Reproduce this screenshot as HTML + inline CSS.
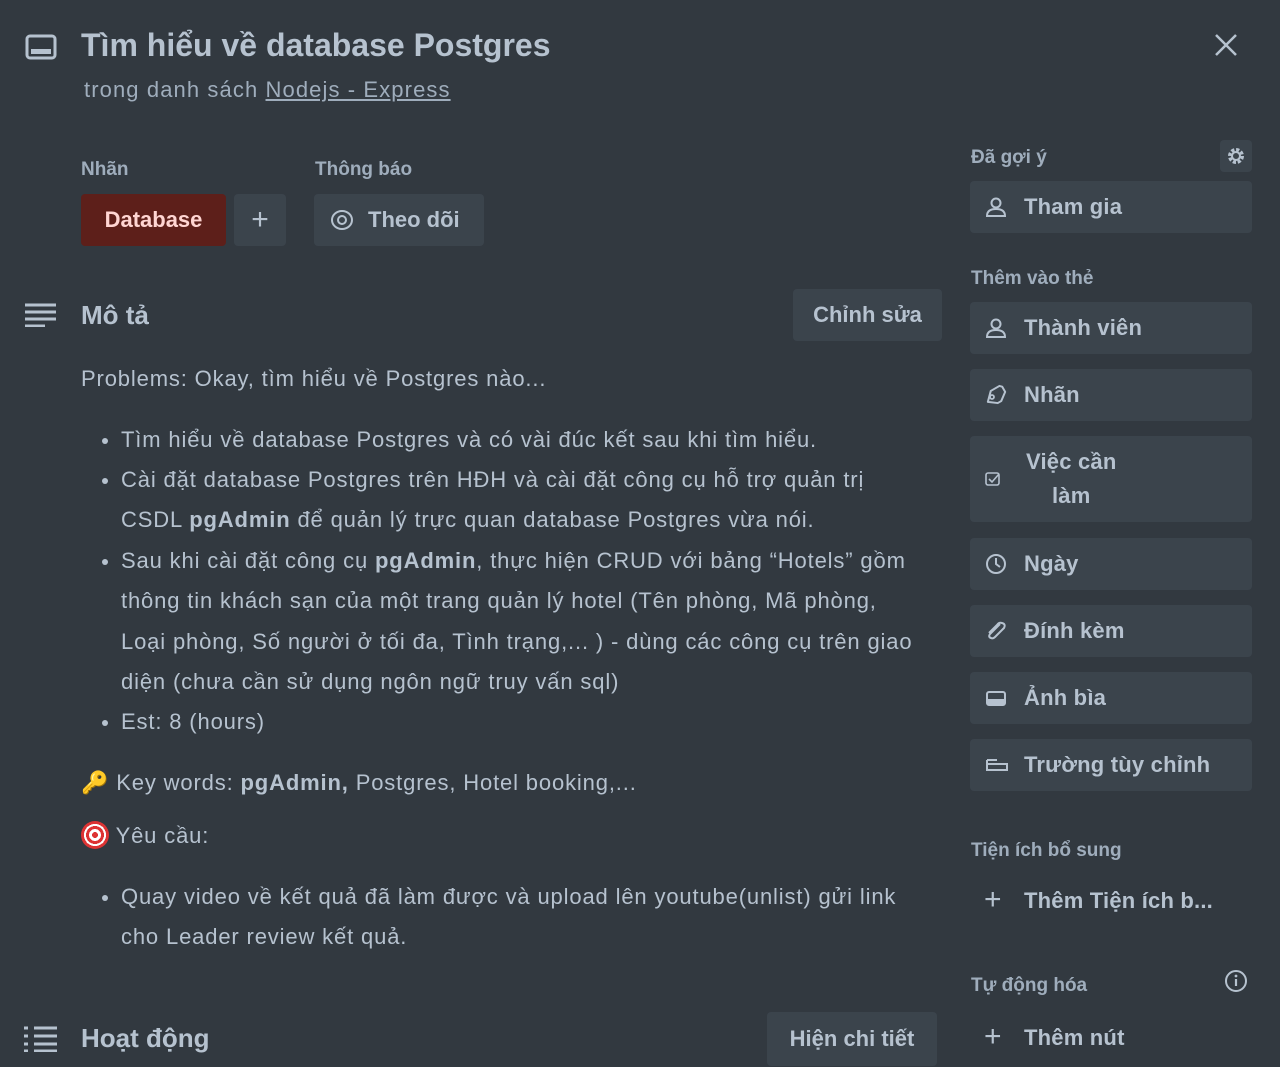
<!DOCTYPE html>
<html><head><meta charset="utf-8"><style>
*{margin:0;padding:0;box-sizing:border-box}
body{width:1280px;height:1067px;background:#323940;color:#b6c2cf;font-family:"Liberation Sans","Noto Sans CJK JP",sans-serif;position:relative;overflow:hidden}
.a{position:absolute;white-space:nowrap}
.btn{position:absolute;background:#3b444c;border-radius:4px;color:#b6c2cf;font-size:22px;display:flex;align-items:center}
.sb{left:970px;width:282px;height:52px;padding-left:54px;font-weight:bold;letter-spacing:0.2px}
.sb svg{position:absolute;left:15px;top:50%;transform:translateY(-50%)}
.h{font-size:19px;font-weight:bold;color:#9fadbc}
.t{font-size:22px;line-height:40.4px;letter-spacing:0.85px}
.li{position:absolute;left:121px;font-size:22px;line-height:40.4px;width:840px;letter-spacing:0.85px;white-space:nowrap}
.li::before{content:"";position:absolute;left:-19px;top:18px;width:6px;height:6px;border-radius:50%;background:#b6c2cf}
b{font-weight:bold}
</style></head><body>
<svg class="a" style="left:25px;top:34px" width="32" height="26" viewBox="0 0 32 26"><rect x="2" y="2" width="28" height="22" rx="3" fill="none" stroke="#b6c2cf" stroke-width="3"/><rect x="6" y="15" width="20" height="5" fill="#b6c2cf"/></svg>
<div class="a" style="left:81px;top:27px;font-size:32px;font-weight:bold;color:#b6c2cf">Tìm hiểu về database Postgres</div>
<div class="a" style="left:84px;top:77px;font-size:22px;color:#9fadbc;letter-spacing:1.1px">trong danh sách <span style="text-decoration:underline">Nodejs - Express</span></div>
<svg class="a" style="left:1214px;top:33px" width="24" height="24" viewBox="0 0 24 24"><path d="M2 2L22 22M22 2L2 22" stroke="#b6c2cf" stroke-width="2.5"/></svg>

<div class="a h" style="left:81px;top:159px">Nhãn</div>
<div class="a h" style="left:315px;top:159px">Thông báo</div>
<div class="btn" style="left:81px;top:194px;width:145px;height:52px;background:#5d1f1a;color:#ffd5d2;justify-content:center;font-weight:bold">Database</div>
<div class="btn" style="left:234px;top:194px;width:52px;height:52px;justify-content:center;font-size:30px">+</div>
<div class="btn" style="left:314px;top:194px;width:170px;height:52px;padding-left:54px;font-weight:bold"><svg style="position:absolute;left:16px;top:15px" width="24" height="22" viewBox="0 0 24 22"><ellipse cx="12" cy="11" rx="10" ry="9" fill="none" stroke="#b6c2cf" stroke-width="2"/><circle cx="12" cy="11" r="4" fill="none" stroke="#b6c2cf" stroke-width="2"/></svg>Theo dõi</div>

<svg class="a" style="left:25px;top:303px" width="32" height="24" viewBox="0 0 32 24"><path d="M0 2H31M0 9H31M0 16H31M0 23H20" stroke="#b6c2cf" stroke-width="3"/></svg>
<div class="a" style="left:81px;top:300px;font-size:26px;font-weight:bold">Mô tả</div>
<div class="btn" style="left:793px;top:289px;width:149px;height:52px;justify-content:center;font-weight:bold">Chỉnh sửa</div>

<div class="a t" style="left:81px;top:359px">Problems: Okay, tìm hiểu về Postgres nào...</div>
<div class="li" style="top:420px">Tìm hiểu về database Postgres và có vài đúc kết sau khi tìm hiểu.</div>
<div class="li" style="top:460px">Cài đặt database Postgres trên HĐH và cài đặt công cụ hỗ trợ quản trị<br>CSDL <b>pgAdmin</b> để quản lý trực quan database Postgres vừa nói.</div>
<div class="li" style="top:541px">Sau khi cài đặt công cụ <b>pgAdmin</b>, thực hiện CRUD với bảng “Hotels” gồm<br>thông tin khách sạn của một trang quản lý hotel (Tên phòng, Mã phòng,<br>Loại phòng, Số người ở tối đa, Tình trạng,... ) - dùng các công cụ trên giao<br>diện (chưa cần sử dụng ngôn ngữ truy vấn sql)</div>
<div class="li" style="top:702px">Est: 8 (hours)</div>
<div class="a t" style="left:81px;top:763px"><span style="color:#e0a030">🔑</span> Key words: <b>pgAdmin,</b> Postgres, Hotel booking,...</div>
<div class="a t" style="left:81px;top:816px"><span style="display:inline-block;width:28px;height:28px;border-radius:50%;background:radial-gradient(circle,#d33 0 3px,#fff 3px 6px,#d33 6px 9px,#fff 9px 11px,#d33 11px);vertical-align:-6px"></span> Yêu cầu:</div>
<div class="li" style="top:877px">Quay video về kết quả đã làm được và upload lên youtube(unlist) gửi link<br>cho Leader review kết quả.</div>

<svg class="a" style="left:24px;top:1026px" width="34" height="26" viewBox="0 0 34 26"><path d="M0 2H4M10 2H33M0 10H4M10 10H33M0 18H4M10 18H33M0 25H4M10 25H33" stroke="#b6c2cf" stroke-width="3"/></svg>
<div class="a" style="left:81px;top:1023px;font-size:26px;font-weight:bold">Hoạt động</div>
<div class="btn" style="left:767px;top:1012px;width:170px;height:54px;justify-content:center;font-weight:bold">Hiện chi tiết</div>

<div class="a h" style="left:971px;top:147px">Đã gợi ý</div>
<div class="btn" style="left:1220px;top:140px;width:32px;height:32px;justify-content:center"><svg width="22" height="22" viewBox="0 0 22 22"><circle cx="11" cy="11" r="6" fill="none" stroke="#b6c2cf" stroke-width="4" stroke-dasharray="3 1.7"/><circle cx="11" cy="11" r="4" fill="none" stroke="#b6c2cf" stroke-width="2"/></svg></div>
<div class="btn sb" style="top:181px"><svg width="22" height="22" viewBox="0 0 22 22"><circle cx="11" cy="7" r="4.5" fill="none" stroke="#b6c2cf" stroke-width="2"/><path d="M2 20Q2 13 11 13Q20 13 20 20Z" fill="none" stroke="#b6c2cf" stroke-width="2"/></svg>Tham gia</div>
<div class="a h" style="left:971px;top:268px">Thêm vào thẻ</div>
<div class="btn sb" style="top:302px"><svg width="22" height="22" viewBox="0 0 22 22"><circle cx="11" cy="7" r="4.5" fill="none" stroke="#b6c2cf" stroke-width="2"/><path d="M2 20Q2 13 11 13Q20 13 20 20Z" fill="none" stroke="#b6c2cf" stroke-width="2"/></svg>Thành viên</div>
<div class="btn sb" style="top:369px"><svg width="22" height="22" viewBox="0 0 22 22"><path d="M1 13L9 5H19L21 7V13L13 19H9Z" fill="none" stroke="#b6c2cf" stroke-width="2" stroke-linejoin="round" transform="rotate(-30 11 12)"/><circle cx="7" cy="13" r="2" fill="none" stroke="#b6c2cf" stroke-width="1.8"/></svg>Nhãn</div>
<div class="btn sb" style="top:436px;height:86px;padding-left:56px;line-height:34px;text-align:center"><svg width="16" height="16" viewBox="0 0 16 16"><rect x="1" y="2" width="13" height="12" rx="2" fill="none" stroke="#b6c2cf" stroke-width="1.6"/><path d="M4 8L7 11L14 3" fill="none" stroke="#b6c2cf" stroke-width="1.6"/></svg><div>Việc cần<br>làm</div></div>
<div class="btn sb" style="top:538px"><svg width="22" height="22" viewBox="0 0 22 22"><circle cx="11" cy="11" r="9" fill="none" stroke="#b6c2cf" stroke-width="2"/><path d="M11 5V11L15 14" fill="none" stroke="#b6c2cf" stroke-width="2"/></svg>Ngày</div>
<div class="btn sb" style="top:605px"><svg width="22" height="22" viewBox="0 0 22 22"><path d="M15 4L5 14Q3 17 6 18Q8 19 10 17L19 8Q21 4 17 3Q14 2 12 5L4 13" fill="none" stroke="#b6c2cf" stroke-width="2"/></svg>Đính kèm</div>
<div class="btn sb" style="top:672px"><svg width="22" height="22" viewBox="0 0 22 22"><rect x="2" y="5" width="18" height="13" rx="2" fill="none" stroke="#b6c2cf" stroke-width="2"/><rect x="2" y="12" width="18" height="6" fill="#b6c2cf"/></svg>Ảnh bìa</div>
<div class="btn sb" style="top:739px"><svg width="24" height="22" viewBox="0 0 24 22"><path d="M2 6H12M2 6V16H22V10H2" fill="none" stroke="#b6c2cf" stroke-width="2"/></svg>Trường tùy chỉnh</div>
<div class="a h" style="left:971px;top:840px">Tiện ích bổ sung</div>
<div class="btn sb" style="top:875px;background:none"><span style="position:absolute;left:14px;font-size:30px;top:8px;font-weight:normal">+</span>Thêm Tiện ích b...</div>
<div class="a h" style="left:971px;top:975px">Tự động hóa</div>
<svg class="a" style="left:1224px;top:969px" width="24" height="24" viewBox="0 0 24 24"><circle cx="12" cy="12" r="10" fill="none" stroke="#b6c2cf" stroke-width="2"/><path d="M12 10V17" stroke="#b6c2cf" stroke-width="2.2"/><circle cx="12" cy="7" r="1.4" fill="#b6c2cf"/></svg>
<div class="btn sb" style="top:1012px;background:none"><span style="position:absolute;left:14px;font-size:30px;top:8px;font-weight:normal">+</span>Thêm nút</div>
</body></html>
